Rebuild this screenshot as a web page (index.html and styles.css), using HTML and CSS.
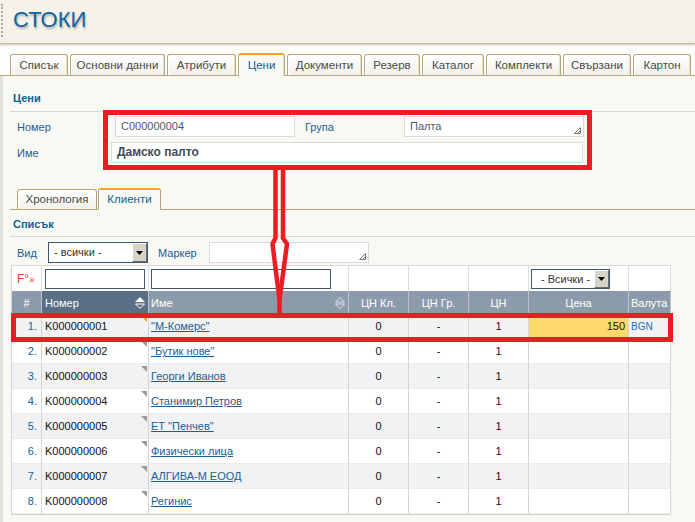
FILE: index.html
```html
<!DOCTYPE html>
<html lang="bg">
<head>
<meta charset="utf-8">
<title>Стоки</title>
<link rel="stylesheet" href="styles.css">
</head>
<body>
<div class="page">
  <header class="topbar"><h1 class="title">СТОКИ</h1></header>

  <nav class="tabs">
    <div class="tab t1">Списък</div>
    <div class="tab t2">Основни данни</div>
    <div class="tab t3">Атрибути</div>
    <div class="tab t4 active">Цени</div>
    <div class="tab t5">Документи</div>
    <div class="tab t6">Резерв</div>
    <div class="tab t7">Каталог</div>
    <div class="tab t8">Комплекти</div>
    <div class="tab t9">Свързани</div>
    <div class="tab t10">Картон</div>
  </nav>

  <main class="panel">
    <div class="section-title">Цени</div>
    <div class="form">
      <div class="frow">
        <span class="lbl l-num">Номер</span>
        <div class="inp i-num">C000000004</div>
        <span class="lbl l-grp">Група</span>
        <div class="inp i-grp">Палта
          <svg class="grip" width="7" height="7" viewBox="0 0 7 7"><path d="M6.5 0.5 L0.5 6.5 M6.5 3.5 L3.5 6.5 M0.5 6.5 H6.5 V0.5" fill="none" stroke="#777" stroke-width="1"/></svg>
        </div>
      </div>
      <div class="frow r2">
        <span class="lbl l-name">Име</span>
        <div class="inp i-name">Дамско палто</div>
      </div>
    </div>

    <div class="subtabs">
      <div class="stab s1">Хронология</div>
      <div class="stab s2 active">Клиенти</div>
    </div>

    <div class="section-title list-title">Списък</div>

    <div class="filters">
      <span class="lbl l-vid">Вид</span>
      <div class="select sel-vid"><span class="sel-text">- всички -</span><span class="sel-btn"><svg width="7" height="4" viewBox="0 0 7 4"><path d="M0 0 H7 L3.5 4 Z" fill="#000"/></svg></span></div>
      <span class="lbl l-mark">Маркер</span>
      <div class="inp i-mark">
        <svg class="grip" width="7" height="7" viewBox="0 0 7 7"><path d="M6.5 0.5 L0.5 6.5 M6.5 3.5 L3.5 6.5 M0.5 6.5 H6.5 V0.5" fill="none" stroke="#777" stroke-width="1"/></svg>
      </div>
    </div>

    <table class="grid">
      <colgroup>
        <col class="c-idx"><col class="c-num"><col class="c-name"><col class="c-n1"><col class="c-n2"><col class="c-n3"><col class="c-price"><col class="c-cur">
      </colgroup>
      <tr class="filter-row">
        <td class="fx">F°<span class="raquo">»</span></td>
        <td><div class="finp f-num"></div></td>
        <td><div class="finp f-name"></div></td>
        <td></td><td></td><td></td>
        <td><div class="select sel-all"><span class="sel-text">- Всички -</span><span class="sel-btn"><svg width="7" height="4" viewBox="0 0 7 4"><path d="M0 0 H7 L3.5 4 Z" fill="#000"/></svg></span></div></td>
        <td></td>
      </tr>
      <tr class="head-row">
        <th class="h-idx">#</th>
        <th class="h-num sorted"><div class="hcell"><span>Номер</span><svg width="12" height="14" viewBox="0 0 12 14"><path d="M6 1 L11 6 H1 Z" fill="#fff"/><path d="M1.5 8 H10.5 L6 12.5 Z" fill="none" stroke="#fff"/></svg></div></th>
        <th class="h-name"><div class="hcell"><span>Име</span><svg width="12" height="14" viewBox="0 0 12 14"><path d="M6 1.5 L10.5 6 H1.5 Z" fill="none" stroke="#dde3ea"/><path d="M1.5 8 H10.5 L6 12.5 Z" fill="none" stroke="#dde3ea"/></svg></div></th>
        <th>ЦН Кл.</th>
        <th>ЦН Гр.</th>
        <th>ЦН</th>
        <th>Цена</th>
        <th class="h-cur">Валута</th>
      </tr>
      <tr class="row odd">
        <td class="idx">1.</td><td class="num flag">K000000001</td><td class="name"><a href="#">"М-Комерс"</a></td>
        <td>0</td><td>-</td><td>1</td><td class="price hl">150</td><td class="cur">BGN</td>
      </tr>
      <tr class="row">
        <td class="idx">2.</td><td class="num">K000000002</td><td class="name"><a href="#">"Бутик нове"</a></td>
        <td>0</td><td>-</td><td>1</td><td class="price"></td><td class="cur"></td>
      </tr>
      <tr class="row odd">
        <td class="idx">3.</td><td class="num">K000000003</td><td class="name"><a href="#">Георги Иванов</a></td>
        <td>0</td><td>-</td><td>1</td><td class="price"></td><td class="cur"></td>
      </tr>
      <tr class="row">
        <td class="idx">4.</td><td class="num">K000000004</td><td class="name"><a href="#">Станимир Петров</a></td>
        <td>0</td><td>-</td><td>1</td><td class="price"></td><td class="cur"></td>
      </tr>
      <tr class="row odd">
        <td class="idx">5.</td><td class="num">K000000005</td><td class="name"><a href="#">ЕТ "Пенчев"</a></td>
        <td>0</td><td>-</td><td>1</td><td class="price"></td><td class="cur"></td>
      </tr>
      <tr class="row">
        <td class="idx">6.</td><td class="num">K000000006</td><td class="name"><a href="#">Физически лица</a></td>
        <td>0</td><td>-</td><td>1</td><td class="price"></td><td class="cur"></td>
      </tr>
      <tr class="row odd">
        <td class="idx">7.</td><td class="num">K000000007</td><td class="name"><a href="#">АЛГИВА-М ЕООД</a></td>
        <td>0</td><td>-</td><td>1</td><td class="price"></td><td class="cur"></td>
      </tr>
      <tr class="row">
        <td class="idx">8.</td><td class="num">K000000008</td><td class="name"><a href="#">Регинис</a></td>
        <td>0</td><td>-</td><td>1</td><td class="price"></td><td class="cur"></td>
      </tr>
    </table>
  </main>

  <div class="mark mark-form"></div>
  <div class="mark mark-row"></div>
  <svg class="arrow" width="695" height="522" viewBox="0 0 695 522">
    <path d="M275.5 168 V238 L272.5 244 L279.5 300 V314" fill="none" stroke="#ed1c24" stroke-width="4.5" stroke-linejoin="miter"/>
    <path d="M283 168 V238 L287 244 L279.5 300" fill="none" stroke="#ed1c24" stroke-width="4.5" stroke-linejoin="miter"/>
  </svg>
</div>
</body>
</html>
```

FILE: styles.css
```css
* { box-sizing: border-box; }

body {
  margin: 0;
  background: #f9f9f4;
  font: 11px "Liberation Sans", Arial, sans-serif;
  color: #333;
}

.page {
  position: relative;
  min-height: 522px;
}

/* ---------- top bar ---------- */
.topbar {
  height: 44px;
  background: #f4f2e9;
  border-bottom: 1px solid #c8b98a;
  box-shadow: 0 1px 2px rgba(0, 0, 0, 0.22);
  display: flex;
  align-items: flex-start;
  position: relative;
  z-index: 1;
}
.topbar::before {
  content: "";
  width: 0;
  height: 33px;
  margin: 4px 0 0 1px;
  border-left: 2px dotted #aaa;
}
.title {
  margin: 0;
  padding: 7px 0 0 10px;
  font: 22px/26px "Liberation Sans", Arial, sans-serif;
  color: #0e64a0;
  text-shadow: 1px 2px 2px rgba(0, 0, 0, 0.28);
}

/* ---------- main tabs ---------- */
.tabs {
  display: flex;
  align-items: flex-end;
  gap: 2px;
  height: 32px;
  padding: 10px 0 0 10px;
  background: #fdfdfc;
  border-bottom: 1px solid #b8a978;
}
.tab {
  height: 21px;
  line-height: 20px;
  text-align: center;
  color: #4a4a4a;
  font-size: 11.5px;
  border: 1px solid #b5a57a;
  border-bottom: none;
  border-radius: 3px 3px 0 0;
  background: linear-gradient(#ffffff, #f2f1ea);
  box-shadow: inset 1px 1px 0 #fff, inset -1px 0 0 #e6e0cc;
  white-space: nowrap;
}
.tab.active {
  height: 23px;
  margin-bottom: -1px;
  line-height: 20px;
  color: #0f5e96;
  border-top: 2px solid #f6a31f;
  background: #f9f9f4;
}
.t1 { width: 58px; }
.t2 { width: 95px; }
.t3 { width: 69px; }
.t4 { width: 47px; }
.t5 { width: 75px; }
.t6 { width: 56px; }
.t7 { width: 62px; }
.t8 { width: 75px; }
.t9 { width: 68px; }
.t10 { width: 58px; }

/* ---------- panel ---------- */
.panel {
  padding-left: 10px;
  box-shadow: inset 3px 0 0 #e3e3dd;
  padding-bottom: 8px;
}
.section-title {
  padding: 15px 0 5px 3px;
  line-height: 15px;
  font-weight: bold;
  color: #0f5e96;
  border-bottom: 1px solid #d9d9d2;
}
.list-title {
  padding: 7px 0 4px 3px;
}

.form {
  padding-top: 4px;
}
.frow {
  display: flex;
  align-items: center;
  height: 21px;
}
.frow.r2 {
  margin-top: 5px;
}
.lbl {
  color: #1a5e94;
  padding-left: 7px;
  flex: none;
}
.l-num { width: 105px; }
.l-grp { width: 99px; margin-left: 10px; padding-left: 0; }
.l-name { width: 101px; }

.inp {
  position: relative;
  height: 21px;
  line-height: 19px;
  padding-left: 5px;
  background: #fff;
  border: 1px solid #d9d9d9;
  color: #4b5a6a;
  flex: none;
}
.i-num { width: 180px; }
.i-grp { width: 180px; }
.i-name {
  width: 472px;
  font-weight: bold;
  font-size: 12px;
  color: #444b55;
}
.grip {
  position: absolute;
  right: 2px;
  bottom: 2px;
}

/* ---------- sub tabs ---------- */
.subtabs {
  display: flex;
  align-items: flex-end;
  gap: 1px;
  margin-top: 25px;
  padding-left: 7px;
  border-bottom: 1px solid #b8a978;
}
.stab {
  height: 20px;
  line-height: 19px;
  text-align: center;
  color: #4a4a4a;
  font-size: 11.5px;
  border: 1px solid #b5a57a;
  border-bottom: none;
  border-radius: 3px 3px 0 0;
  background: linear-gradient(#ffffff, #f2f1ea);
  box-shadow: inset 1px 1px 0 #fff;
}
.stab.active {
  height: 22px;
  margin-bottom: -1px;
  color: #0f5e96;
  border-top: 2px solid #f6a31f;
  background: #f9f9f4;
}
.s1 { width: 80px; }
.s2 { width: 63px; }

/* ---------- filters ---------- */
.filters {
  display: flex;
  align-items: center;
  height: 21px;
  margin-top: 5px;
}
.l-vid { width: 38px; }
.l-mark { width: 51px; margin-left: 10px; padding-left: 0; }
.i-mark { width: 160px; }

.select {
  display: flex;
  align-items: stretch;
  height: 21px;
  background: #fff;
  border: 1px solid #3e5872;
  flex: none;
}
.sel-vid { width: 100px; }
.sel-text {
  flex: 1;
  padding-left: 5px;
  line-height: 19px;
  color: #333;
  white-space: nowrap;
}
.sel-btn {
  width: 15px;
  display: flex;
  align-items: center;
  justify-content: center;
  background: #d6d3cb;
  border-top: 1px solid #fff;
  border-left: 1px solid #fff;
  border-right: 1px solid #6e6e6e;
  border-bottom: 1px solid #6e6e6e;
}

/* ---------- grid ---------- */
.grid {
  margin: 2px 0 0 1px;
  width: 659px;
  table-layout: fixed;
  border-collapse: separate;
  border-spacing: 0;
  border-top: 1px solid #dadada;
  border-left: 1px solid #d2d2d2;
  border-bottom: 1px solid #d2d2d2;
  background: #fff;
}
.c-idx { width: 30px; }
.c-num { width: 107px; }
.c-name { width: 200px; }
.c-n1, .c-n2, .c-n3 { width: 60px; }
.c-price { width: 100px; }
.c-cur { width: 42px; }

.grid td, .grid th {
  padding: 0;
  border-right: 1px solid #d4d4d4;
  text-align: center;
  white-space: nowrap;
  overflow: hidden;
}
.filter-row td {
  height: 25px;
  background: #fff;
  border-right-color: #dedede;
}
.fx {
  color: #e4401e;
  font-size: 12px;
  text-align: left !important;
  padding-left: 5px !important;
}
.raquo { font-size: 10px; }
.finp {
  height: 20px;
  border: 1px solid #40586f;
  background: #fff;
  margin: 0 auto;
}
.f-num { width: 100px; }
.f-name { width: 180px; margin-left: 2px; }
.sel-all {
  width: 79px;
  height: 20px;
  margin-left: 2px;
}
.sel-all .sel-text { line-height: 18px; }

.head-row th {
  height: 23px;
  background: #8c9bab;
  color: #fff;
  font-weight: normal;
  border-right-color: #bac3cd;
}
.head-row th.sorted { background: #5a6e85; }
.hcell {
  display: flex;
  align-items: center;
  justify-content: space-between;
  padding: 0 2px 0 3px;
}
.h-name .hcell { padding-left: 2px; }
.head-row th.h-cur { text-align: left; padding-left: 2px; }

.grid .row td {
  height: 25px;
  color: #111;
  border-bottom: 1px solid #ececec;
}
.grid .row.odd td { background: #f1f2f4; }
.grid td.idx {
  text-align: right;
  padding-right: 4px;
  color: #1a5e94;
}
.grid td.num {
  text-align: left;
  padding-left: 3px;
  position: relative;
}
.grid td.num::after {
  content: "";
  position: absolute;
  top: 2px;
  right: 1px;
  border-top: 6px solid #9a9a9a;
  border-left: 6px solid transparent;
}
.grid td.num.flag::after { border-top-color: #f5a11c; }
.grid td.name {
  text-align: left;
  padding-left: 2px;
}
.name a {
  color: #1a5e94;
  text-decoration: underline;
}
.grid td.price {
  text-align: right;
  padding-right: 3px;
}
.grid .row td.price.hl { background: #fdd96b; }
.grid td.cur {
  text-align: left;
  padding-left: 2px;
  color: #1f6fc8;
  font-size: 10px;
}

/* ---------- annotations ---------- */
.mark {
  position: absolute;
  border: 5px solid #ed1c24;
  z-index: 5;
}
.mark-form {
  left: 103px;
  top: 110px;
  width: 489px;
  height: 60px;
}
.mark-row {
  left: 11px;
  top: 313px;
  width: 662px;
  height: 29px;
}
.arrow {
  position: absolute;
  left: 0;
  top: 0;
  z-index: 5;
  pointer-events: none;
}
```
